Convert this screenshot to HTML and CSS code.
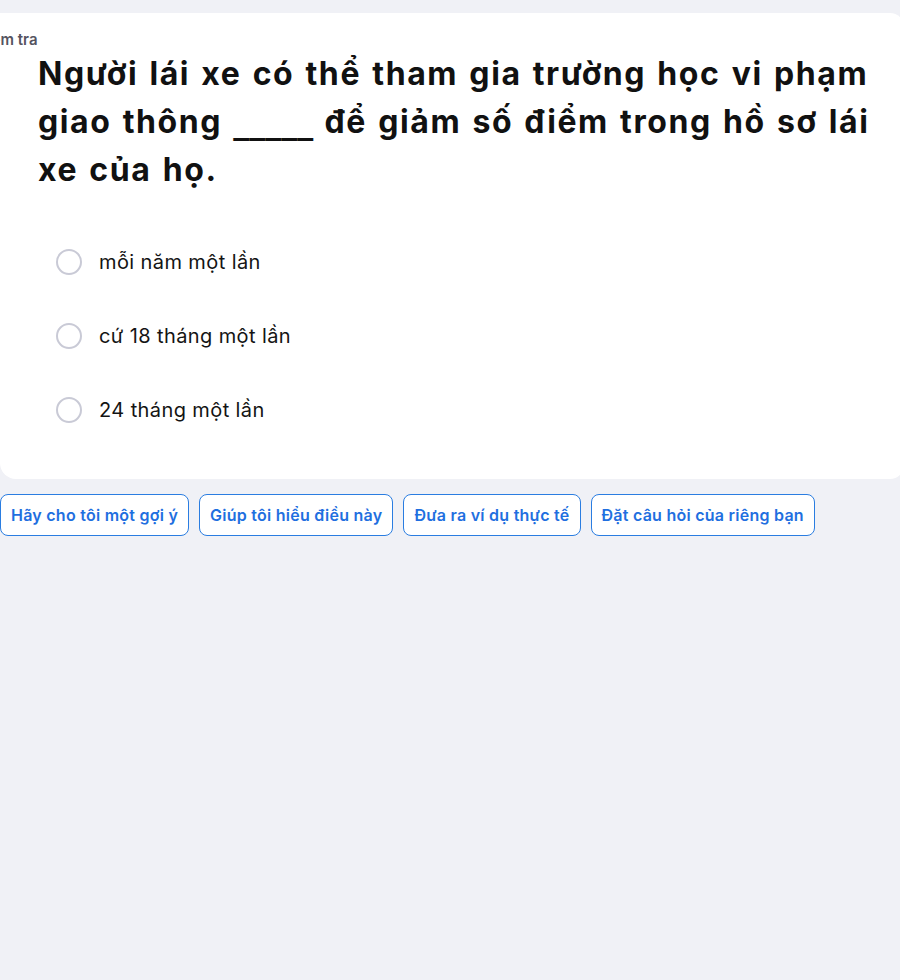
FILE: index.html
```html
<!DOCTYPE html>
<html lang="vi">
<head>
<meta charset="utf-8">
<title>Kiểm tra</title>
<link rel="stylesheet" href="styles.css">
</head>
<body>
<div class="page">
  <section class="card">
    <div class="label">Kiểm tra</div>
    <h1 class="question">Người lái xe có thể tham gia trường học vi phạm giao thông <span class="blank">_____</span> để giảm số điểm trong hồ sơ lái xe của họ.</h1>
    <ul class="options">
      <li class="option"><span class="radio"></span><span class="option-text">mỗi năm một lần</span></li>
      <li class="option"><span class="radio"></span><span class="option-text">cứ 18 tháng một lần</span></li>
      <li class="option"><span class="radio"></span><span class="option-text">24 tháng một lần</span></li>
    </ul>
  </section>
  <div class="actions">
    <button class="chip">Hãy cho tôi một gợi ý</button>
    <button class="chip">Giúp tôi hiểu điều này</button>
    <button class="chip">Đưa ra ví dụ thực tế</button>
    <button class="chip">Đặt câu hỏi của riêng bạn</button>
  </div>
</div>
</body>
</html>
```
FILE: styles.css
```css
html, body {
  margin: 0;
  padding: 0;
}
body {
  background: #f0f1f6;
  font-family: "Inter", "Lato", "Liberation Sans", sans-serif;
  overflow: hidden;
  height: 980px;
}
.page {
  padding-top: 13px;
  width: 904px;
}
.card {
  background: #ffffff;
  border-radius: 0 14px 14px 16px;
  padding: 17px 0 45px 0;
}
.label {
  font-size: 15px;
  line-height: 20px;
  font-weight: 600;
  color: #55545f;
  margin-left: -23px;
}
.question {
  margin: 0 0 0 38px;
  font-size: 32px;
  line-height: 48px;
  font-weight: 700;
  letter-spacing: 1.6px;
  word-spacing: 2px;
  color: #111111;
  width: 845px;
}
.blank {
  font-family: "DejaVu Sans", "Inter", sans-serif;
  letter-spacing: 0;
}
.options {
  list-style: none;
  margin: 44px 0 0 56px;
  padding: 0;
  display: flex;
  flex-direction: column;
  gap: 26px;
}
.option {
  display: flex;
  align-items: center;
  height: 48px;
  gap: 17px;
}
.radio {
  width: 22px;
  height: 22px;
  border: 2px solid #c9cad6;
  border-radius: 50%;
  flex: none;
}
.option-text {
  font-size: 20px;
  letter-spacing: 0.4px;
  color: #141414;
}
.actions {
  display: flex;
  gap: 10px;
  margin-top: 15px;
}
.chip {
  font-family: inherit;
  height: 42px;
  padding: 0 10px;
  border: 1px solid #2a7de1;
  border-radius: 8px;
  background: #ffffff;
  color: #1f6fe0;
  font-size: 16px;
  font-weight: 600;
  letter-spacing: 0.25px;
  cursor: pointer;
}
```
